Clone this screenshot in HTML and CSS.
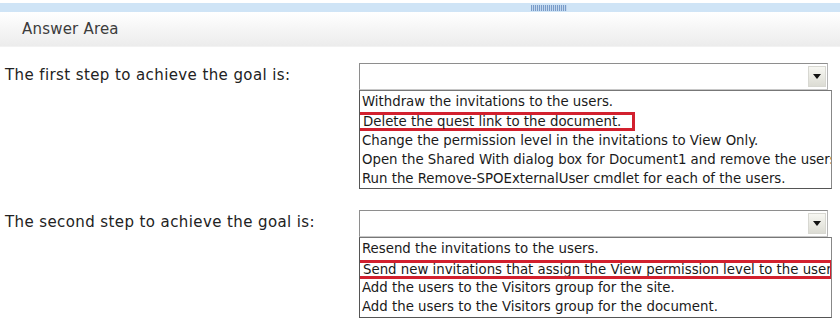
FILE: index.html
```html
<!DOCTYPE html>
<html>
<head>
<meta charset="utf-8">
<link rel="stylesheet" href="styles.css">
</head>
<body>
<div class="topbar"><span class="grip"></span></div>
<div class="header">Answer Area</div>
<div class="content">
  <div class="row">
    <div class="label">The first step to achieve the goal is:</div>
    <div class="control">
      <div class="select"><span class="btn"><svg width="8" height="5" viewBox="0 0 8 5"><path d="M0 0H8L4 5Z" fill="#111"/></svg></span></div>
      <div class="list">
        <div class="item">Withdraw the invitations to the users.</div>
        <div class="item"><span class="mark">Delete the quest link to the document.</span></div>
        <div class="item">Change the permission level in the invitations to View Only.</div>
        <div class="item">Open the Shared With dialog box for Document1 and remove the users.</div>
        <div class="item">Run the Remove-SPOExternalUser cmdlet for each of the users.</div>
      </div>
    </div>
  </div>
  <div class="row">
    <div class="label">The second step to achieve the goal is:</div>
    <div class="control">
      <div class="select"><span class="btn"><svg width="8" height="5" viewBox="0 0 8 5"><path d="M0 0H8L4 5Z" fill="#111"/></svg></span></div>
      <div class="list">
        <div class="item">Resend the invitations to the users.</div>
        <div class="item"><span class="mark full">Send new invitations that assign the View permission level to the users.</span></div>
        <div class="item">Add the users to the Visitors group for the site.</div>
        <div class="item">Add the users to the Visitors group for the document.</div>
      </div>
    </div>
  </div>
</div>
</body>
</html>
```
FILE: styles.css
```css
html, body {
  margin: 0;
  padding: 0;
  background: #fff;
}
body {
  width: 840px;
  height: 321px;
  overflow: hidden;
  font-family: "DejaVu Sans", Verdana, sans-serif;
}
.topbar {
  margin-top: 3px;
  height: 9px;
  background: #cfe4f6;
  display: flex;
  justify-content: center;
  padding-left: 258px;
  box-sizing: border-box;
}
.grip {
  margin-top: 2px;
  width: 36px;
  height: 6px;
  background: repeating-linear-gradient(90deg, #6f95c4 0 1px, #c2d6ee 1px 2px), #7d9fcc;
  opacity: 0.9;
}
.header {
  height: 35px;
  box-sizing: border-box;
  padding: 8px 0 0 22px;
  font-size: 15px;
  letter-spacing: 0.2px;
  color: #3c3c3c;
  background: linear-gradient(#ffffff, #ececec);
  border-bottom: 1px solid #f2f2f2;
}
.content {
  padding-top: 16px;
  display: flex;
  flex-direction: column;
  gap: 21px;
}
.row {
  display: flex;
}
.label {
  width: 354px;
  padding-left: 5px;
  padding-top: 3px;
  font-size: 15px;
  letter-spacing: 0.4px;
  color: #222;
}
.control {
  width: 473px;
}
.select {
  width: 469px;
  height: 27px;
  box-sizing: border-box;
  border: 1px solid #8e8e8e;
  border-right-color: #b5b5b5;
  border-bottom-color: #c8c8c8;
  background: #fff;
  display: flex;
  justify-content: flex-end;
  align-items: center;
  padding-right: 1px;
}
.btn {
  width: 18px;
  height: 21px;
  box-sizing: border-box;
  background: linear-gradient(#f7f7f2, #dcdcd4);
  border: 1px solid #d8d8d2;
  display: flex;
  justify-content: center;
  align-items: center;
}
.list {
  width: 473px;
  box-sizing: border-box;
  border: 1px solid #555;
  border-top-color: #777;
  border-right-color: #888;
  overflow: hidden;
  padding: 0 0 1px 2px;
  font-family: "DejaVu Sans Condensed", "DejaVu Sans", sans-serif;
  font-size: 14.8px;
  color: #1a1a1a;
}
.item {
  height: 19.3px;
  line-height: 19px;
  white-space: nowrap;
}
.mark {
  display: inline-block;
  vertical-align: top;
  margin: 2px 0 0 -5px;
  height: 19px;
  box-sizing: border-box;
  padding: 0 11px 0 3px;
  line-height: 12px;
  border: 3px solid #d2202e;
}
.mark.full {
  width: 476px;
  overflow: hidden;
  padding-right: 0;
}
```
